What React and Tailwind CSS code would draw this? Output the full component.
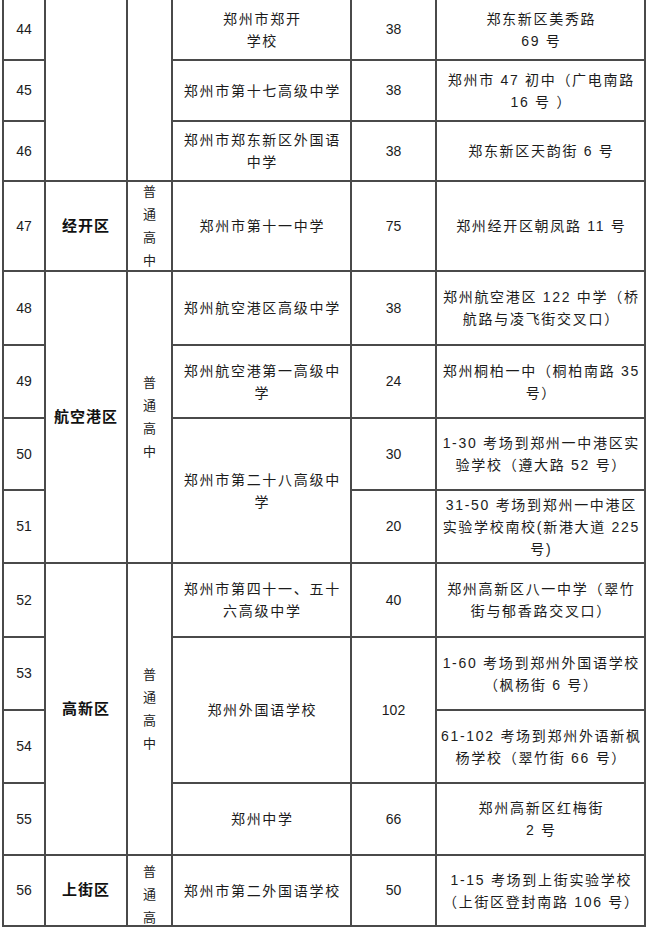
import React from 'react'

const FONT = { fontFamily: '"Liberation Sans", "Noto Sans CJK SC", sans-serif' }

function Cell({ className = '', children }) {
    return (
        <div className={`flex items-center justify-center text-center overflow-hidden border-r-2 border-b-2 border-[#4a4a4a] ${className}`}>
            {children}
        </div>
    )
}

function Lines({ lines }) {
    return (
        <div className="text-[14px] leading-[22px] tracking-[1.7px] pl-[1.7px] text-[#1c1c1c] whitespace-nowrap">
            {lines.map((line, i) => (
                <div key={i}>{line}</div>
            ))}
        </div>
    )
}

function Num({ children }) {
    return <span className="text-[14px] text-[#1c1c1c]">{children}</span>
}

function District({ children }) {
    return <span className="text-[15px] font-bold tracking-[1px] text-[#111]">{children}</span>
}

function Vertical({ chars }) {
    return (
        <div className="flex flex-col items-center text-[13px] leading-[23px] text-[#222]">
            {chars.split('').map((c, i) => (
                <span key={i}>{c}</span>
            ))}
        </div>
    )
}

export default function App() {
    return (
        <div className="w-[650px] h-[932px] bg-white overflow-hidden" style={FONT}>
            <div className="ml-[2px] w-max border-l-2 border-[#4a4a4a] grid grid-cols-[42px_82px_45px_179px_85px_209px] grid-rows-[61px_61px_60px_90px_74px_73px_72px_73px_74px_73px_73px_72px_71px]">
                {/* 44 */}
                <Cell className="col-start-1 row-start-1"><Num>44</Num></Cell>
                <Cell className="col-start-2 row-start-1 row-span-3" />
                <Cell className="col-start-3 row-start-1 row-span-3" />
                <Cell className="col-start-4 row-start-1"><Lines lines={['郑州市郑开', '学校']} /></Cell>
                <Cell className="col-start-5 row-start-1"><Num>38</Num></Cell>
                <Cell className="col-start-6 row-start-1"><Lines lines={['郑东新区美秀路', '69 号']} /></Cell>

                {/* 45 */}
                <Cell className="col-start-1 row-start-2"><Num>45</Num></Cell>
                <Cell className="col-start-4 row-start-2"><Lines lines={['郑州市第十七高级中学']} /></Cell>
                <Cell className="col-start-5 row-start-2"><Num>38</Num></Cell>
                <Cell className="col-start-6 row-start-2"><Lines lines={['郑州市 47 初中（广电南路', '16 号 ）']} /></Cell>

                {/* 46 */}
                <Cell className="col-start-1 row-start-3"><Num>46</Num></Cell>
                <Cell className="col-start-4 row-start-3"><Lines lines={['郑州市郑东新区外国语', '中学']} /></Cell>
                <Cell className="col-start-5 row-start-3"><Num>38</Num></Cell>
                <Cell className="col-start-6 row-start-3"><Lines lines={['郑东新区天韵街 6 号']} /></Cell>

                {/* 47 */}
                <Cell className="col-start-1 row-start-4"><Num>47</Num></Cell>
                <Cell className="col-start-2 row-start-4"><District>经开区</District></Cell>
                <Cell className="col-start-3 row-start-4"><Vertical chars="普通高中" /></Cell>
                <Cell className="col-start-4 row-start-4"><Lines lines={['郑州市第十一中学']} /></Cell>
                <Cell className="col-start-5 row-start-4"><Num>75</Num></Cell>
                <Cell className="col-start-6 row-start-4"><Lines lines={['郑州经开区朝凤路 11 号']} /></Cell>

                {/* 48 - 51 */}
                <Cell className="col-start-1 row-start-5"><Num>48</Num></Cell>
                <Cell className="col-start-2 row-start-5 row-span-4"><District>航空港区</District></Cell>
                <Cell className="col-start-3 row-start-5 row-span-4"><Vertical chars="普通高中" /></Cell>
                <Cell className="col-start-4 row-start-5"><Lines lines={['郑州航空港区高级中学']} /></Cell>
                <Cell className="col-start-5 row-start-5"><Num>38</Num></Cell>
                <Cell className="col-start-6 row-start-5"><Lines lines={['郑州航空港区 122 中学（桥', '航路与凌飞街交叉口）']} /></Cell>

                <Cell className="col-start-1 row-start-6"><Num>49</Num></Cell>
                <Cell className="col-start-4 row-start-6"><Lines lines={['郑州航空港第一高级中', '学']} /></Cell>
                <Cell className="col-start-5 row-start-6"><Num>24</Num></Cell>
                <Cell className="col-start-6 row-start-6"><Lines lines={['郑州桐柏一中（桐柏南路 35', '号）']} /></Cell>

                <Cell className="col-start-1 row-start-7"><Num>50</Num></Cell>
                <Cell className="col-start-4 row-start-7 row-span-2"><Lines lines={['郑州市第二十八高级中', '学']} /></Cell>
                <Cell className="col-start-5 row-start-7"><Num>30</Num></Cell>
                <Cell className="col-start-6 row-start-7"><Lines lines={['1-30 考场到郑州一中港区实', '验学校（遵大路 52 号）']} /></Cell>

                <Cell className="col-start-1 row-start-8"><Num>51</Num></Cell>
                <Cell className="col-start-5 row-start-8"><Num>20</Num></Cell>
                <Cell className="col-start-6 row-start-8"><Lines lines={['31-50 考场到郑州一中港区', '实验学校南校(新港大道 225', '号)']} /></Cell>

                {/* 52 - 55 */}
                <Cell className="col-start-1 row-start-9"><Num>52</Num></Cell>
                <Cell className="col-start-2 row-start-9 row-span-4"><District>高新区</District></Cell>
                <Cell className="col-start-3 row-start-9 row-span-4"><Vertical chars="普通高中" /></Cell>
                <Cell className="col-start-4 row-start-9"><Lines lines={['郑州市第四十一、五十', '六高级中学']} /></Cell>
                <Cell className="col-start-5 row-start-9"><Num>40</Num></Cell>
                <Cell className="col-start-6 row-start-9"><Lines lines={['郑州高新区八一中学（翠竹', '街与郁香路交叉口）']} /></Cell>

                <Cell className="col-start-1 row-start-10"><Num>53</Num></Cell>
                <Cell className="col-start-4 row-start-10 row-span-2"><Lines lines={['郑州外国语学校']} /></Cell>
                <Cell className="col-start-5 row-start-10 row-span-2"><Num>102</Num></Cell>
                <Cell className="col-start-6 row-start-10"><Lines lines={['1-60 考场到郑州外国语学校', '（枫杨街 6 号）']} /></Cell>

                <Cell className="col-start-1 row-start-11"><Num>54</Num></Cell>
                <Cell className="col-start-6 row-start-11"><Lines lines={['61-102 考场到郑州外语新枫', '杨学校（翠竹街 66 号）']} /></Cell>

                <Cell className="col-start-1 row-start-12"><Num>55</Num></Cell>
                <Cell className="col-start-4 row-start-12"><Lines lines={['郑州中学']} /></Cell>
                <Cell className="col-start-5 row-start-12"><Num>66</Num></Cell>
                <Cell className="col-start-6 row-start-12"><Lines lines={['郑州高新区红梅街', '2 号']} /></Cell>

                {/* 56 - the type cell is cut short in the source, only three characters show */}
                <Cell className="col-start-1 row-start-13"><Num>56</Num></Cell>
                <Cell className="col-start-2 row-start-13"><District>上街区</District></Cell>
                <Cell className="col-start-3 row-start-13 !items-start pt-[4px]"><Vertical chars="普通高" /></Cell>
                <Cell className="col-start-4 row-start-13"><Lines lines={['郑州市第二外国语学校']} /></Cell>
                <Cell className="col-start-5 row-start-13"><Num>50</Num></Cell>
                <Cell className="col-start-6 row-start-13"><Lines lines={['1-15 考场到上街实验学校', '（上街区登封南路 106 号）']} /></Cell>
            </div>
        </div>
    )
}
